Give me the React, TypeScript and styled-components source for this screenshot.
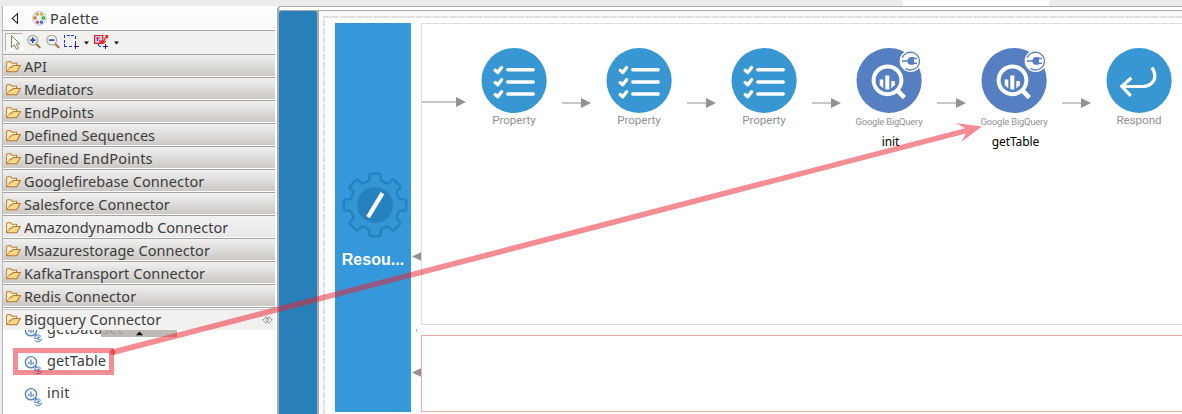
import React from "react";
import styled, { createGlobalStyle } from "styled-components";

const GlobalStyle = createGlobalStyle`
  *, *::before, *::after { box-sizing: border-box; }
  body { margin: 0; overflow: hidden; background: #fff; }
  svg { display: block; flex: none; overflow: visible; }
`;

const uiFont = `"Noto Sans", "Open Sans", sans-serif`;

const Window = styled.div`
  position: relative;
  width: 1182px;
  height: 414px;
  overflow: hidden;
  display: flex;
  flex-direction: column;
  font-family: ${uiFont};
`;

const TabStrip = styled.div`
  flex: none;
  height: 6px;
  padding-left: 903px;
  background: #ececec;
`;

const ActiveTab = styled.div`
  width: 146px;
  height: 6px;
  background: #fff;
`;

const Workbench = styled.div`
  flex: 1;
  min-height: 0;
  display: flex;
`;

const Gutter = styled.div`
  width: 3px;
  background: #ececec;
  border-right: 1px solid #b4bac0;
`;

const PaletteView = styled.aside`
  width: 274px;
  padding-right: 2px;
  display: flex;
  flex-direction: column;
  background: #fff;
`;

const PaletteHeader = styled.div`
  flex: none;
  height: 25px;
  display: flex;
  align-items: center;
  padding: 1px 0 0 8px;
  background: linear-gradient(#fff, #f8f8f7);
  border-bottom: 1px solid #aaa7a5;
`;

const PaletteTitle = styled.span`
  margin: 0 0 1px 3px;
  font-size: 14.5px;
  line-height: 20px;
  letter-spacing: 0.2px;
  color: #3c3c3c;
`;

const Toolbar = styled.div`
  flex: none;
  height: 23px;
  display: flex;
  align-items: flex-start;
  padding: 2px 0 0 2px;
  background: #f2f1f0;
`;

const ToolButton = styled.div<{ $width: number }>`
  width: ${(p) => p.$width}px;
  height: 18px;
`;

const PressedTool = styled.div`
  width: 18px;
  height: 18px;
  margin-right: 4px;
  border: 1px solid;
  border-color: #b5b1ae #fff #fff #b5b1ae;
  background: #f7f6f5;
`;

const Drawer = styled.div<{ $tone: "normal" | "hover" | "open" }>`
  flex: none;
  height: 23px;
  display: flex;
  align-items: center;
  padding: 2px 2px 0 3px;
  border-top: 1px solid #a5a2a0;
  border-bottom: 1px solid ${(p) => (p.$tone === "open" ? "#f2f1f0" : "#fff")};
  background: ${(p) =>
    p.$tone === "normal"
      ? "linear-gradient(#f2f1f0, #cbc8c5)"
      : p.$tone === "hover"
      ? "linear-gradient(#f3f2f2, #e9e8e7)"
      : "linear-gradient(#fff 0 1px, #cfccca 1px 2px, #f2f1f0 2px)"};
`;

const DrawerLabel = styled.span<{ $track: number }>`
  flex: 1;
  margin-left: 3px;
  font-size: 14.5px;
  line-height: 19px;
  letter-spacing: ${(p) => p.$track}px;
  white-space: nowrap;
  color: #3c3c3c;
`;

const Entries = styled.div`
  position: relative;
  flex: 1;
  min-height: 0;
  overflow: hidden;
`;

const EntryList = styled.div`
  margin-top: -17px;
`;

const Entry = styled.div`
  height: 32px;
  display: flex;
  align-items: center;
  padding-left: 21px;
`;

const EntryLabel = styled.span<{ $track: number }>`
  margin: 0 0 2px 3px;
  font-size: 14.5px;
  line-height: 20px;
  letter-spacing: ${(p) => p.$track}px;
  color: #3c3c3c;
`;

const ScrollUp = styled.div`
  position: absolute;
  left: 98px;
  top: 0;
  width: 76px;
  height: 7px;
  display: flex;
  justify-content: center;
  background: rgba(178, 174, 170, 0.85);
`;

const Editor = styled.main`
  flex: 1;
  min-width: 0;
  display: flex;
  flex-direction: column;
  border-top: 1px solid #aaa;
  border-left: 2px solid #aaa;
  border-top-left-radius: 4px;
  background: #fff;
`;

const EditorBody = styled.div`
  flex: 1;
  min-height: 0;
  margin-top: 3px;
  display: flex;
  border-top: 1px solid #aaa;
  background: #aaa;
`;

const ApiBar = styled.div`
  width: 38px;
  border-radius: 3px 3px 0 0;
  background: #2980b9;
`;

const Canvas = styled.div`
  flex: 1;
  min-width: 0;
  margin-left: 2px;
  padding: 5px 0 0 4px;
  display: grid;
  grid-template-columns: 2px 1fr;
  grid-template-rows: 2px 1fr;
  background: #f8f8f8;
`;

const DashTop = styled.div`
  grid-column: 1 / 3;
  background: repeating-linear-gradient(90deg, #e0e0e0 0 7px, #f4f4f4 7px 8.45px);
`;

const DashLeft = styled.div`
  background: repeating-linear-gradient(#f4f4f4 0 2px, #e0e0e0 2px 8.45px);
`;

const Resource = styled.div`
  display: flex;
  padding: 5px 0 2px 10px;
  background: #fff;
`;

const ResourceLane = styled.div`
  width: 76px;
  height: 389px;
  padding: 149px 0 0 3px;
  display: flex;
  flex-direction: column;
  align-items: center;
  background: #3498db;
`;

const ResourceName = styled.div`
  margin: 12px 3px 0 0;
  font: bold 16px/20px "Liberation Sans", Arial, sans-serif;
  letter-spacing: 0.05px;
  color: #fff;
`;

const Ports = styled.div`
  width: 10px;
  padding: 229px 0 0 1px;
  display: flex;
  flex-direction: column;
`;

const PortSpacer = styled.div`
  height: 68px;
`;

const PortTick = styled.div`
  width: 1px;
  height: 3px;
  margin: 0 0 36px 4px;
  background: #b5b5b5;
`;

const Compartments = styled.div`
  flex: 1;
  min-width: 0;
  display: flex;
  flex-direction: column;
  gap: 10px;
`;

const InSequence = styled.div`
  height: 302px;
  display: flex;
  align-items: flex-start;
  padding-top: 24px;
  border: solid #dedede;
  border-width: 1px 0 1px 1px;
`;

const FaultSequence = styled.div`
  height: 77px;
  border: solid #efaaa6;
  border-width: 1px 0 1px 1px;
`;

const Link = styled.div<{ $entry?: boolean }>`
  flex: none;
  padding: ${(p) => (p.$entry ? "49px 15px 0 0" : "50px 15px 0 15px")};
`;

const Mediator = styled.div`
  flex: none;
  width: 66px;
  display: flex;
  flex-direction: column;
  align-items: center;
`;

const Kind = styled.div<{ $small?: boolean }>`
  height: 14px;
  margin-top: ${(p) => (p.$small ? 2 : 0)}px;
  font: ${(p) => (p.$small ? "9.4px/14px" : "11.6px/14px")} Roboto, sans-serif;
  letter-spacing: ${(p) => (p.$small ? -0.18 : -0.04)}px;
  white-space: nowrap;
  color: #8f9193;
`;

const OperationName = styled.div`
  margin: 5px 0 0 3px;
  font-size: 12px;
  line-height: 16px;
  letter-spacing: -0.1px;
  color: #000;
`;

const Annotation = styled.svg`
  position: absolute;
  left: 0;
  top: 0;
  pointer-events: none;
`;

const FolderIcon = () => (
  <svg width="15" height="12" viewBox="0 0 15 12">
    <path d="M.7 10.6V1.6L1.6.7h3.2l1.2 1.6h4.6v2.2" fill="#fdf0c8" stroke="#b87f35" strokeWidth="1.1" />
    <path d="M.8 10.8 4 6.3l2.2-.6 1-1.2h7.2L10.8 10.8Z" fill="#fbd98a" stroke="#b4762c" strokeWidth="1.1" strokeLinejoin="round" />
    <path d="M2 9.5V2" stroke="#fff4d5" />
  </svg>
);

const PaletteIcon = () => (
  <svg width="15" height="16" viewBox="0 0 15 16">
    <circle cx="7.4" cy="7.2" r="6.9" fill="#e6eefa" stroke="#bccde6" />
    <circle cx="5.2" cy="3.2" r="1.2" fill="#f2b632" stroke="#d28a00" strokeWidth=".8" />
    <circle cx="9.6" cy="3.2" r="1.2" fill="#e6d934" stroke="#a89b14" strokeWidth=".8" />
    <circle cx="3" cy="6.9" r="1.3" fill="#f6a030" stroke="#d0650c" strokeWidth=".8" />
    <circle cx="11.4" cy="7" r="1.4" fill="#76d54f" stroke="#20941c" strokeWidth=".9" />
    <circle cx="5.4" cy="11.2" r="1.2" fill="#f06b60" stroke="#c72b23" strokeWidth=".8" />
    <circle cx="9.4" cy="11.2" r="1.2" fill="#5f8fe4" stroke="#1d50bb" strokeWidth=".9" />
  </svg>
);

const CursorIcon = () => (
  <svg width="16" height="16" viewBox="0 0 16 16">
    <path d="M5.5 1.5v11.8l2.8-2.5 2.2 4.6 2-1-2.1-4.4h3.5Z" fill="#fffef0" stroke="#85806a" />
  </svg>
);

const ZoomIcon = ({ plus }: { plus?: boolean }) => (
  <svg width="14" height="16" viewBox="0 -1.5 14 16">
    <path d="m9.3 9.5 3.3 3.3" stroke="#9a7b55" strokeWidth="2.2" strokeLinecap="round" />
    <circle cx="5.7" cy="5.6" r="4.9" fill="#edf2fb" stroke="#a9a08d" strokeWidth="1.1" />
    <path d={plus ? "M2.9 5.6h5.6M5.7 2.8v5.6" : "M2.9 5.6h5.6"} stroke="#2d4fae" strokeWidth="1.7" />
  </svg>
);

const MarqueeIcon = () => (
  <svg width="15" height="16" viewBox="0 -2 15 16" shapeRendering="crispEdges">
    <path d="M.5 12V.5H12" fill="none" stroke="#1a35ee" strokeDasharray="3 1.5" />
    <path d="M11.5 1v8M0 11.5h9" stroke="#1a35ee" strokeDasharray="3 1.5" />
    <path d="M9.5 11.5h5M11.5 9v5" stroke="#31107e" />
  </svg>
);

const LinkMarqueeIcon = () => (
  <svg width="15" height="16" viewBox="0 -2 15 16">
    <path d="M.5.5h8.3v7.8H.5Z" fill="#ccd0f5" stroke="#ee1c1c" strokeWidth="1.2" />
    <path d="M2 3h4M3.5 3v3M6 5v3" stroke="#b21b55" strokeWidth="1.2" />
    <path d="M9 7.5h1.8V3.5l2-2M12 .7h1.6v2H12ZM7.6 5.8h1.8v1.8H7.6Z" fill="none" stroke="#ee1c1c" strokeWidth="1.2" />
    <path d="M4.5 9v2.5H8" fill="none" stroke="#1a35ee" strokeWidth="1.2" strokeDasharray="2 1" />
    <path d="M9 11.5h5M11.5 9v5" stroke="#31107e" />
  </svg>
);

const Caret = () => (
  <svg width="5" height="18" viewBox="0 0 5 18">
    <path d="M0 8.5h5L2.5 11.5Z" fill="#111" />
  </svg>
);

const PinIcon = () => (
  <svg width="11" height="8" viewBox="0 0 11 8">
    <path d="M4 .8.8 4 4 7.2M7 .8 10.2 4 7 7.2M4 .8 7 4 4 7.2M7 .8 4 4l3 3.2" fill="none" stroke="#666" strokeWidth=".9" strokeDasharray="1.3 .4" />
  </svg>
);

const ConnectorIcon = () => (
  <svg width="20" height="20" viewBox="0 0 20 20">
    <circle cx="7" cy="11.2" r="5.6" fill="#fff" stroke="#5580c0" strokeWidth="1.4" />
    <path d="M4.8 10.7v2.6M7 8.6v5.6M9.2 11.1v2.3" stroke="#5580c0" strokeWidth="1.3" />
    <path d="m10.8 15 1.6 1.6" stroke="#5580c0" strokeWidth="1.6" />
    <circle cx="14" cy="19.4" r="3.5" fill="#fff" stroke="#5580c0" strokeWidth="1" strokeDasharray="9 1.5" />
    <path d="M10.7 19.2h3m2.2-1.1h-1.8v2.6h1.8" fill="none" stroke="#5580c0" strokeWidth="1.1" />
  </svg>
);

const gearPath = (() => {
  const points: string[] = [];
  for (let i = 0; i < 8; i++) {
    const a = (i * Math.PI) / 4;
    const profile: [number, number][] = [
      [24.8, -0.27],
      [26.4, -0.22],
      [30.6, -0.185],
      [31.5, -0.14],
      [31.5, 0.14],
      [30.6, 0.185],
      [26.4, 0.22],
      [24.8, 0.27],
    ];
    profile.forEach(([r, d]) =>
      points.push(`${(33 + r * Math.sin(a + d)).toFixed(2)} ${(33 - r * Math.cos(a + d)).toFixed(2)}`)
    );
  }
  return `M${points.join("L")}Z`;
})();

const GearIcon = () => (
  <svg width="66" height="66" viewBox="0 0 66 66">
    <path d={gearPath} fill="#3596d6" stroke="#2582c0" strokeWidth="2.4" strokeLinejoin="round" />
    <circle cx="33" cy="33" r="18" fill="#2582bf" />
    <path d="M26 45.2 40.5 21.2" stroke="#fff" strokeWidth="4.2" />
  </svg>
);

const PropertyIcon = () => (
  <svg width="66" height="65" viewBox="0 0 66 65">
    <circle cx="33.1" cy="32.5" r="32.6" fill="#3897d3" />
    {[21.8, 34, 46].map((y) => (
      <g key={y} fill="none" stroke="#fff" strokeLinecap="round" strokeLinejoin="round">
        <path d={`M14.2 ${y + 0.5}l2.6 2.2 3.8-5`} strokeWidth="3.4" />
        <path d={`M26.8 ${y - 0.1}H52.2`} strokeWidth="3.5" />
      </g>
    ))}
  </svg>
);

const BigQueryIcon = () => (
  <svg width="66" height="65" viewBox="0 0 66 65">
    <circle cx="33.1" cy="32.5" r="32.6" fill="#557fc1" />
    <circle cx="31.5" cy="32.3" r="13.9" fill="none" stroke="#fff" strokeWidth="4" />
    <path d="M42 43.2 48.4 49.6" stroke="#fff" strokeWidth="4.6" />
    <path d="M23.7 31.5h3.6v8.7l-3.6-3ZM29.3 27.6h4v14h-4ZM35.3 33h3.6v4.2l-3.6 3Z" fill="#fff" />
    <circle cx="54.6" cy="13" r="11" fill="#fff" />
    <path d="M46.2 9.8A9 9 0 0 1 63.5 13.5 9 9 0 0 1 49.5 20.4" fill="none" stroke="#557fc1" strokeWidth="1.3" />
    <path d="M46 13h6M58 10.6h3M58 15.2h3" stroke="#557fc1" strokeWidth="1.5" />
    <path d="M58 9v7.8h-2.6a3.9 3.9 0 0 1 0-7.8Z" fill="#557fc1" />
  </svg>
);

const RespondIcon = () => (
  <svg width="66" height="65" viewBox="0 0 66 65">
    <circle cx="33.1" cy="32.5" r="32.6" fill="#3897d3" />
    <path d="M25.4 29.8 15.8 38.4 24.8 47.8M16 38.5H36.5C43 38.5 48.8 34.5 48.8 28 48.8 24.5 47.6 21.6 45.8 19.4" fill="none" stroke="#fff" strokeWidth="3.2" />
  </svg>
);

const FlowArrow = ({ length }: { length: number }) => (
  <svg width={length} height="10" viewBox={`0 0 ${length} 10`}>
    <path d={`M0 5H${length - 9}`} stroke="#c8c8c8" strokeWidth="2" />
    <path d={`M${length - 10} 0 ${length} 5 ${length - 10} 10Z`} fill="#929292" />
  </svg>
);

const PortArrow = () => (
  <svg width="9" height="9" viewBox="0 0 9 9">
    <path d="M9 .3v8.4L0 4.5Z" fill="#929292" />
  </svg>
);

type Tone = "normal" | "hover" | "open";
const drawers: { name: string; track: number; tone?: Tone }[] = [
  { name: "API", track: 0 },
  { name: "Mediators", track: 0.05 },
  { name: "EndPoints", track: 0.2 },
  { name: "Defined Sequences", track: 0.03 },
  { name: "Defined EndPoints", track: 0.18 },
  { name: "Googlefirebase Connector", track: 0.08 },
  { name: "Salesforce Connector", track: 0.08 },
  { name: "Amazondynamodb Connector", track: 0.02, tone: "hover" },
  { name: "Msazurestorage Connector", track: 0.06 },
  { name: "KafkaTransport Connector", track: 0.1 },
  { name: "Redis Connector", track: 0.04 },
  { name: "Bigquery Connector", track: 0.05, tone: "open" },
];

const entries = [
  { name: "getDataset", track: 0.1 },
  { name: "getTable", track: 0.12 },
  { name: "init", track: 0.3 },
];

const mediators: { kind: string; icon: React.FC; operation?: string }[] = [
  { kind: "Property", icon: PropertyIcon },
  { kind: "Property", icon: PropertyIcon },
  { kind: "Property", icon: PropertyIcon },
  { kind: "Google BigQuery", icon: BigQueryIcon, operation: "init" },
  { kind: "Google BigQuery", icon: BigQueryIcon, operation: "getTable" },
  { kind: "Respond", icon: RespondIcon },
];

export default function App() {
  return (
    <Window>
      <GlobalStyle />
      <TabStrip>
        <ActiveTab />
      </TabStrip>
      <Workbench>
        <Gutter />
        <PaletteView>
          <PaletteHeader>
            <svg width="21" height="12" viewBox="0 0 21 12">
              <path d="M6.5 .7v9.6L1.2 5.5Z" fill="#fff" stroke="#222" strokeWidth="1.1" />
            </svg>
            <PaletteIcon />
            <PaletteTitle>Palette</PaletteTitle>
          </PaletteHeader>
          <Toolbar>
            <PressedTool>
              <CursorIcon />
            </PressedTool>
            <ToolButton $width={19}>
              <ZoomIcon plus />
            </ToolButton>
            <ToolButton $width={18}>
              <ZoomIcon />
            </ToolButton>
            <ToolButton $width={20}>
              <MarqueeIcon />
            </ToolButton>
            <ToolButton $width={10}>
              <Caret />
            </ToolButton>
            <ToolButton $width={20}>
              <LinkMarqueeIcon />
            </ToolButton>
            <ToolButton $width={6}>
              <Caret />
            </ToolButton>
          </Toolbar>
          {drawers.map((d) => (
            <Drawer key={d.name} $tone={d.tone ?? "normal"}>
              <FolderIcon />
              <DrawerLabel $track={d.track}>{d.name}</DrawerLabel>
              {d.tone === "open" && <PinIcon />}
            </Drawer>
          ))}
          <Entries>
            <EntryList>
              {entries.map((e) => (
                <Entry key={e.name}>
                  <ConnectorIcon />
                  <EntryLabel $track={e.track}>{e.name}</EntryLabel>
                </Entry>
              ))}
            </EntryList>
            <ScrollUp>
              <svg width="7" height="6" viewBox="0 0 7 6">
                <path d="M0 5.3h7L3.5 1.6Z" fill="#000" />
              </svg>
            </ScrollUp>
          </Entries>
        </PaletteView>
        <Editor>
          <EditorBody>
            <ApiBar />
            <Canvas>
              <DashTop />
              <DashLeft />
              <Resource>
                <ResourceLane>
                  <GearIcon />
                  <ResourceName>Resou...</ResourceName>
                </ResourceLane>
                <Ports>
                  <PortArrow />
                  <PortSpacer />
                  <PortTick />
                  <PortArrow />
                </Ports>
                <Compartments>
                  <InSequence>
                    {mediators.map((m, i) => (
                      <React.Fragment key={i}>
                        <Link $entry={i === 0}>
                          <FlowArrow length={i === 0 ? 44 : 29} />
                        </Link>
                        <Mediator>
                          <m.icon />
                          <Kind $small={!!m.operation}>{m.kind}</Kind>
                          {m.operation && <OperationName>{m.operation}</OperationName>}
                        </Mediator>
                      </React.Fragment>
                    ))}
                  </InSequence>
                  <FaultSequence />
                </Compartments>
              </Resource>
            </Canvas>
          </EditorBody>
        </Editor>
      </Workbench>
      <Annotation width="1182" height="414" viewBox="0 0 1182 414">
        <g fill="#ed1c2a" fillOpacity=".5">
          <path fillRule="evenodd" d="M13 348h101v27H13ZM18 353v17h91v-17Z" />
          <path d="M112 349.6 965 128.2 956 123 982 126.6 961.5 141.8 965.8 133.6 113.5 355.1Z" />
          <circle cx="112.5" cy="352.3" r="2.8" />
        </g>
      </Annotation>
    </Window>
  );
}
